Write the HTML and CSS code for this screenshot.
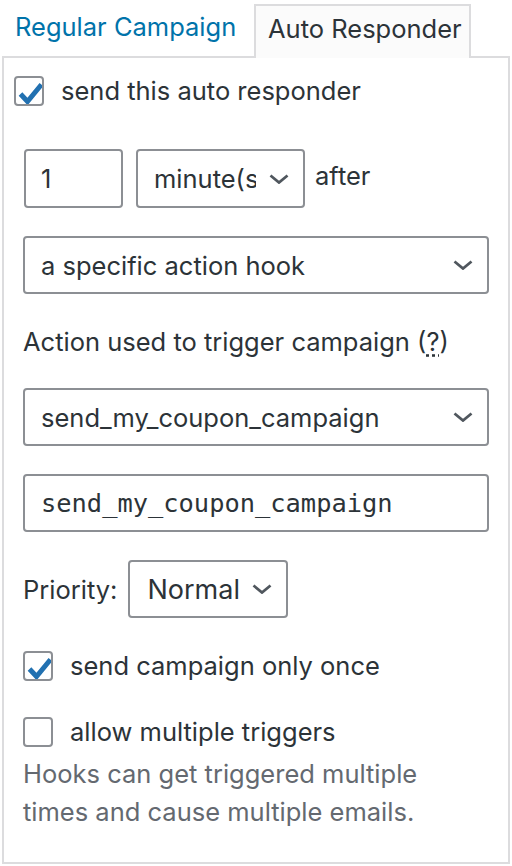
FILE: index.html
```html
<!DOCTYPE html>
<html>
<head>
<meta charset="utf-8">
<link rel="stylesheet" href="styles.css">
</head>
<body>
<div class="box">
  <div class="tabs">
    <a class="tab-link" href="#">Regular Campaign</a>
    <div class="tab-active">Auto Responder</div>
  </div>
  <div class="panel">
    <label class="check-row first">
      <span class="cb checked"><svg viewBox="0 0 30 30" width="30" height="30"><path d="M6.5 18 L13.5 25.5 L27.5 8.5" fill="none" stroke="#2271b1" stroke-width="5"/></svg></span>
      <span class="cb-label">send this auto responder</span>
    </label>

    <div class="content">
      <div class="delay-row">
        <div class="ctl input-num">1</div>
        <div class="ctl select select-unit"><span class="sel-text clip">minute(s)</span><svg class="chev" viewBox="0 0 20 10" width="20" height="10"><path d="M1.5 1.5 L10 8.5 L18.5 1.5" fill="none" stroke="#50575e" stroke-width="2.8"/></svg></div>
        <span class="after">after</span>
      </div>

      <div class="ctl select wide trigger"><span class="sel-text">a specific action hook</span><svg class="chev" viewBox="0 0 20 10" width="20" height="10"><path d="M1.5 1.5 L10 8.5 L18.5 1.5" fill="none" stroke="#50575e" stroke-width="2.8"/></svg></div>

      <p class="field-label">Action used to trigger campaign <abbr class="help">(<span class="q">?</span>)</abbr></p>

      <div class="ctl select wide hook"><span class="sel-text">send_my_coupon_campaign</span><svg class="chev" viewBox="0 0 20 10" width="20" height="10"><path d="M1.5 1.5 L10 8.5 L18.5 1.5" fill="none" stroke="#50575e" stroke-width="2.8"/></svg></div>

      <div class="ctl input-mono">send_my_coupon_campaign</div>

      <div class="priority-row">
        <span class="prio-label">Priority:</span>
        <div class="ctl select select-prio"><span class="sel-text">Normal</span><svg class="chev" viewBox="0 0 20 10" width="20" height="10"><path d="M1.5 1.5 L10 8.5 L18.5 1.5" fill="none" stroke="#50575e" stroke-width="2.8"/></svg></div>
      </div>

      <label class="check-row once">
        <span class="cb checked"><svg viewBox="0 0 30 30" width="30" height="30"><path d="M6.5 18 L13.5 25.5 L27.5 8.5" fill="none" stroke="#2271b1" stroke-width="5"/></svg></span>
        <span class="cb-label">send campaign only once</span>
      </label>

      <label class="check-row multi">
        <span class="cb"></span>
        <span class="cb-label">allow multiple triggers</span>
      </label>
      <p class="help-text">Hooks can get triggered multiple<br>times and cause multiple emails.</p>
    </div>
  </div>
</div>
</body>
</html>
```

FILE: styles.css
```css
* { box-sizing: border-box; }
html, body { margin: 0; padding: 0; background: #fff; }
body {
  font-family: Inter, "Noto Sans", "Liberation Sans", sans-serif;
  color: #2c3338;
  font-size: 25.5px;
}
.box { padding: 0 2px 0 2px; width: 512px; }
.tabs {
  display: flex;
  align-items: flex-end;
  height: 56px;
  padding-top: 2px;
}
.tab-link {
  color: #0073aa;
  text-decoration: none;
  font-size: 25.5px;
  line-height: 50px;
  padding-left: 13px;
  width: 252px;
  align-self: flex-start;
}
.tab-active {
  height: 54px;
  width: 217px;
  border: 2px solid #dcdcde;
  border-bottom: none;
  background: #fbfbfb;
  color: #2c3338;
  font-size: 25.5px;
  line-height: 46px;
  padding-left: 12px;
  position: relative;
  z-index: 1;
  margin-bottom: -2px;
}
.panel {
  width: 508px;
  border: 2px solid #dcdcde;
  padding: 17px 0 31px 0;
}
.check-row {
  display: flex;
  align-items: center;
  height: 31px;
}
.check-row.first { padding-left: 10px; }
.cb {
  width: 30px;
  height: 30px;
  border: 2px solid #8c8f94;
  border-radius: 4px;
  background: #fff;
  flex: none;
  position: relative;
  overflow: hidden;
}
.cb svg { position: absolute; left: -2px; top: -2px; }
.cb-label { margin-left: 17px; line-height: 30px; }
.content { padding: 0 17px 0 19px; }
.ctl {
  border: 2px solid #8c8f94;
  border-radius: 4px;
  background: #fff;
  height: 59px;
  display: flex;
  align-items: center;
  color: #2c3338;
}
.delay-row {
  display: flex;
  align-items: flex-start;
  margin-top: 43px;
}
.input-num { width: 99px; padding-left: 15px; margin-left: 1px; }
.select { padding-left: 16px; padding-right: 14px; justify-content: space-between; }
.select-unit { width: 169px; margin-left: 13px; }
.clip { overflow: hidden; white-space: nowrap; width: 102px; }
.sel-text { white-space: nowrap; }
.chev { flex: none; }
.after { margin-left: 10px; line-height: 54px; }
.wide { width: 466px; height: 58px; }
.trigger { margin-top: 28px; }
.field-label { margin: 33px 0 0 0; line-height: 30px; }
.help { text-decoration: none; }
.help .q { text-decoration: underline dotted; text-underline-offset: 3px; }
.hook { margin-top: 31px; }
.input-mono {
  width: 466px;
  height: 58px;
  margin-top: 28px;
  padding-left: 16px;
  font-family: "DejaVu Sans Mono", "Liberation Mono", monospace;
  font-size: 25.4px;
}
.priority-row { display: flex; align-items: center; margin-top: 28px; }
.prio-label { margin-right: 11px; }
.select-prio { width: 160px; height: 58px; font-size: 27px; padding-left: 17px; }
.check-row.once { margin-top: 32px; }
.check-row.multi { margin-top: 35px; }
.help-text {
  margin: 8px 0 0 0;
  line-height: 38px;
  color: #646970;
}
```
